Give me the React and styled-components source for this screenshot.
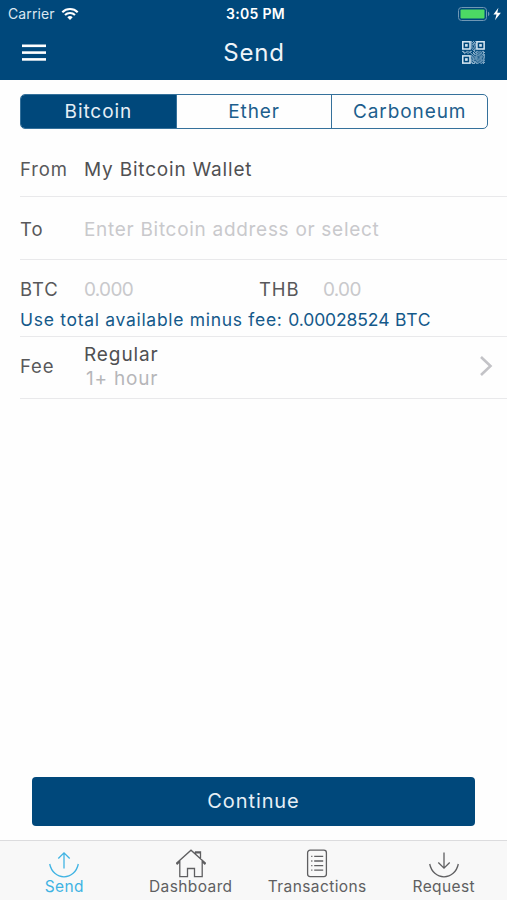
import React from "react";
import styled, { createGlobalStyle } from "styled-components";

// data modules of the QR icon, the three finder squares are drawn separately
const QR_ROWS = [
  "000000001010100000000",
  "000000001101000000000",
  "000000001011100000000",
  "000000001110100000000",
  "000000001001100000000",
  "000000001101000000000",
  "000000001010100000000",
  "000000000101100000000",
  "000000000011000000000",
  "110011011001011010110",
  "011110110010110101011",
  "001001001011011011010",
  "000000000101110110111",
  "000000001010011101011",
  "000000001101110011101",
  "000000000110111011011",
  "000000001011110111010",
  "000000001110011101111",
  "000000001011101011010",
  "000000001101110110111",
  "000000000111011001010",
];

const TABS = ["Bitcoin", "Ether", "Carboneum"];

const NAV = [
  { label: "Send", icon: "send" },
  { label: "Dashboard", icon: "home" },
  { label: "Transactions", icon: "list" },
  { label: "Request", icon: "request" },
];

const QrIcon = () => (
  <svg width="23" height="23" viewBox="0 0 21 21">
    <g fill="#8fb3cd">
      {QR_ROWS.map((row, y) =>
        row
          .split("")
          .map((cell, x) =>
            cell === "1" ? (
              <rect key={`${x}-${y}`} x={x} y={y} width="1" height="1" />
            ) : null
          )
      )}
    </g>
    <g fill="none" stroke="#d5e6f2" strokeWidth="1.4">
      <rect x="0.7" y="0.7" width="6.6" height="6.6" />
      <rect x="13.6" y="0.7" width="6.6" height="6.6" />
      <rect x="0.7" y="13.6" width="6.6" height="6.6" />
    </g>
    <g fill="#d5e6f2">
      <rect x="2.8" y="2.8" width="2.4" height="2.4" />
      <rect x="15.7" y="2.8" width="2.4" height="2.4" />
      <rect x="2.8" y="15.7" width="2.4" height="2.4" />
    </g>
  </svg>
);

const WifiIcon = () => (
  <svg width="18" height="14" viewBox="0 0 18 14" fill="none">
    <path
      d="M1.3 5.2a11 11 0 0 1 15.4 0M4 8a7.1 7.1 0 0 1 10 0"
      stroke="#fff"
      strokeWidth="2.1"
    />
    <path d="M9 13l-2.7-2.7a3.9 3.9 0 0 1 5.4 0z" fill="#fff" />
  </svg>
);

const BatteryIcon = () => (
  <svg width="44" height="16" viewBox="0 0 44 16" fill="none">
    <rect x="0.5" y="1.5" width="28" height="13" rx="3" stroke="#6f97b5" />
    <rect x="2.5" y="3.5" width="24" height="9" rx="1" fill="#4cd964" />
    <path d="M30 5.8c1.8.6 1.8 3.8 0 4.4z" fill="#6f97b5" />
    <path d="M40.4 1.8l-5 6.8h3.1L37 14.2l5.9-7.5h-3.6z" fill="#fff" />
  </svg>
);

const MenuIcon = () => (
  <svg width="24" height="18" viewBox="0 0 24 18" fill="#fff">
    <rect y="0.5" width="24" height="2.6" />
    <rect y="7.3" width="24" height="2.6" />
    <rect y="14.1" width="24" height="2.6" />
  </svg>
);

const ChevronIcon = () => (
  <svg width="14" height="22" viewBox="0 0 14 22" fill="none">
    <path d="M2 2l9.5 9L2 20" stroke="#c3c3c7" strokeWidth="2.6" />
  </svg>
);

const NavIcon = ({ name }) => (
  <svg
    width="30"
    height="30"
    viewBox="0 0 30 30"
    fill="none"
    stroke="currentColor"
    strokeWidth="1.3"
  >
    {name === "send" && (
      <path d="M.7 15c1.6 7.8 7.4 12.8 14.3 12.8S27.7 22.8 29.3 15M15 19.5V4M9.3 9.5L15 3.8l5.7 5.7" />
    )}
    {name === "request" && (
      <path d="M.7 15c1.6 7.8 7.4 12.8 14.3 12.8S27.7 22.8 29.3 15M15 3.5v15.7M9.3 13.5l5.7 5.7 5.7-5.7" />
    )}
    {name === "home" && (
      <path d="M1.2 15l-.7-.8L15 1.2l14.5 13-.7.8-2.6-2.2V27.6h-7.7V19.5h-7v8.1H3.8V12.8zM19.5 5V2.8h5v7.3M19.5 3.8h5" />
    )}
    {name === "list" && (
      <>
        <rect x="5.6" y="1.2" width="18.8" height="26.4" rx="2.5" />
        <path d="M12.2 7.4h9M12.2 12h9M12.2 16.6h9M12.2 21.2h9" />
        <path d="M9.2 7.4h1.2M9.2 12h1.2M9.2 16.6h1.2M9.2 21.2h1.2" />
      </>
    )}
  </svg>
);

const App = () => {
  return (
    <Screen>
      <GlobalStyle />
      <Header>
        <StatusBar>
          <Carrier>
            Carrier
            <WifiIcon />
          </Carrier>
          <Time>3:05 PM</Time>
          <Battery>
            <BatteryIcon />
          </Battery>
        </StatusBar>
        <TitleBar>
          <MenuIcon />
          <Title>Send</Title>
          <QrIcon />
        </TitleBar>
      </Header>

      <Tabs>
        {TABS.map((label, i) => (
          <Tab key={label} $active={i === 0}>
            {label}
          </Tab>
        ))}
      </Tabs>

      <Form>
        <FromRow>
          <Label>From</Label>
          <Value $tracking={0.8}>My Bitcoin Wallet</Value>
        </FromRow>
        <ToRow>
          <Label>To</Label>
          <Placeholder $tracking={0.7}>
            Enter Bitcoin address or select
          </Placeholder>
        </ToRow>
        <AmountRow>
          <Amounts>
            <Label>BTC</Label>
            <AmountInput $width={175}>0.000</AmountInput>
            <Label>THB</Label>
            <AmountInput>0.00</AmountInput>
          </Amounts>
          <UseTotal>
            Use total available minus fee: <Total>0.00028524</Total> BTC
          </UseTotal>
        </AmountRow>
        <FeeRow>
          <Label>Fee</Label>
          <FeeChoice>
            <Value $tracking={0.9}>Regular</Value>
            <FeeTime $tracking={0.8}>1+ hour</FeeTime>
          </FeeChoice>
          <ChevronIcon />
        </FeeRow>
      </Form>

      <ContinueButton>Continue</ContinueButton>

      <BottomNav>
        {NAV.map(({ label, icon }, i) => (
          <NavItem key={label} $active={i === 0}>
            <NavIcon name={icon} />
            <span>{label}</span>
          </NavItem>
        ))}
      </BottomNav>
    </Screen>
  );
};

const GlobalStyle = createGlobalStyle`
  * {
    box-sizing: border-box;
  }

  body {
    margin: 0;
    font-family: Inter, "Liberation Sans", sans-serif;
    background-color: #fefefe;
  }

  svg {
    display: block;
    flex-shrink: 0;
  }
`;

const Screen = styled.div`
  width: 100%;
  height: 900px;
  display: flex;
  flex-direction: column;
  background-color: #fefefe;
  white-space: nowrap;
`;

const Header = styled.header`
  height: 80px;
  flex-shrink: 0;
  background-color: #00487b;
  color: white;
`;

const StatusBar = styled.div`
  height: 27px;
  display: grid;
  grid-template-columns: 1fr auto 1fr;
  align-items: center;
  padding: 0 5px 0 8px;
`;

const Carrier = styled.div`
  display: flex;
  align-items: center;
  gap: 6px;
  font-size: 14px;
  letter-spacing: 0.1px;
  color: #dbe7f1;
`;

const Time = styled.div`
  padding-left: 1px;
  font-size: 14px;
  font-weight: 600;
  letter-spacing: 0.3px;
`;

const Battery = styled.div`
  display: flex;
  justify-content: flex-end;
`;

const TitleBar = styled.div`
  height: 51px;
  display: flex;
  align-items: center;
  justify-content: space-between;
  padding: 0 22px;
`;

const Title = styled.h1`
  margin: 0;
  font-size: 24px;
  font-weight: 400;
  letter-spacing: 0.8px;
  color: #eef4f9;
`;

const Tabs = styled.div`
  height: 35px;
  flex-shrink: 0;
  display: flex;
  margin: 14px 19px 0 20px;
  border: 1px solid #35719b;
  border-radius: 5px;
  overflow: hidden;
`;

const Tab = styled.div`
  flex: 1;
  display: flex;
  align-items: center;
  justify-content: center;
  font-size: 19px;
  letter-spacing: 0.9px;
  color: ${({ $active }) => ($active ? "#e6eff6" : "#1d5e8d")};
  background-color: ${({ $active }) => ($active ? "#00487b" : "transparent")};

  & + & {
    border-left: 1px solid #35719b;
  }
`;

const Form = styled.div`
  margin: 6px 0 0 20px;
`;

const Row = styled.div`
  display: flex;
  align-items: center;
  padding-right: 14px;
  border-bottom: 1px solid #e9e9eb;
`;

const FromRow = styled(Row)`
  height: 62px;
  padding-top: 7px;
`;

const ToRow = styled(Row)`
  height: 63px;
  padding-top: 2px;
`;

const FeeRow = styled(Row)`
  height: 62px;
  padding-bottom: 3px;
`;

const Label = styled.div`
  width: 64px;
  flex-shrink: 0;
  font-size: 18.5px;
  letter-spacing: 0.9px;
  color: #58585a;
`;

const Value = styled.div`
  font-size: 19px;
  letter-spacing: ${({ $tracking }) => $tracking}px;
  color: #505052;
`;

const Placeholder = styled(Value)`
  color: #c9c9cc;
`;

const AmountRow = styled.div`
  height: 77px;
  padding-top: 17px;
  border-bottom: 1px solid #e9e9eb;
`;

const Amounts = styled.div`
  height: 24px;
  display: flex;
  align-items: baseline;
  line-height: 24px;
`;

const AmountInput = styled(Placeholder)`
  width: ${({ $width }) => ($width ? `${$width}px` : "auto")};
  letter-spacing: -0.7px;
`;

const UseTotal = styled.div`
  margin-top: 8px;
  font-size: 17.5px;
  line-height: 22px;
  letter-spacing: 0.7px;
  color: #14598a;
`;

const Total = styled.span`
  letter-spacing: -0.1px;
`;

const FeeChoice = styled.div`
  flex: 1;
  padding-top: 2px;
  line-height: 24px;
`;

const FeeTime = styled(Value)`
  padding-left: 2px;
  color: #b6b6b9;
`;

const ContinueButton = styled.div`
  height: 49px;
  flex-shrink: 0;
  display: flex;
  align-items: center;
  justify-content: center;
  margin: auto 32px 14px;
  padding-bottom: 1px;
  border-radius: 4px;
  background-color: #00487b;
  color: #e6eff6;
  font-size: 20px;
  letter-spacing: 0.9px;
`;

const BottomNav = styled.nav`
  height: 60px;
  flex-shrink: 0;
  display: grid;
  grid-template-columns: repeat(4, 1fr);
  padding-left: 1px;
  background-color: #f8f8f8;
  border-top: 1px solid #dcdcde;
`;

const NavItem = styled.div`
  display: flex;
  flex-direction: column;
  align-items: center;
  padding-top: 8px;
  font-size: 15.5px;
  line-height: 15px;
  letter-spacing: 0.4px;
  color: ${({ $active }) => ($active ? "#3fb3e3" : "#5f5f61")};
`;

export default App;
